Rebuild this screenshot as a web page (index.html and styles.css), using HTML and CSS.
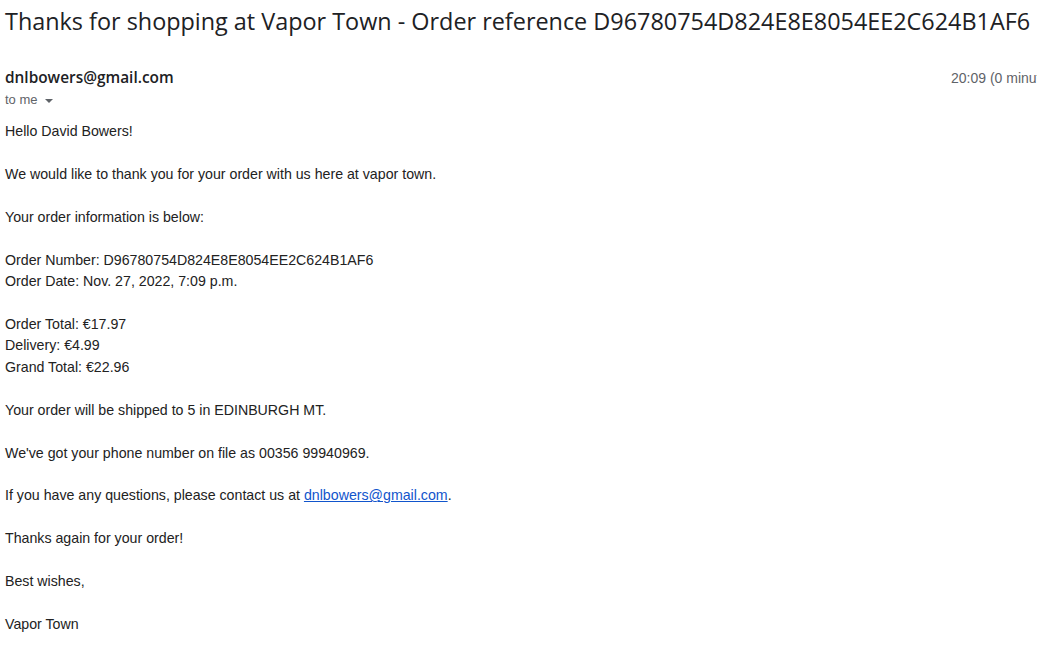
FILE: index.html
```html
<!DOCTYPE html>
<html>
<head>
<meta charset="utf-8">
<link rel="stylesheet" href="styles.css">
</head>
<body>
<div class="page">
  <h1 class="subject">Thanks for shopping at Vapor Town - Order reference D96780754D824E8E8054EE2C624B1AF6</h1>
  <div class="header">
    <div class="sender">
      <div class="from">dnlbowers@gmail.com</div>
      <div class="to">to me <svg class="caret" width="10" height="6" viewBox="0 0 10 6"><path d="M1 1h8L5 5z" fill="#5f6368"/></svg></div>
    </div>
    <div class="time">20:09 (0 minutes ago)</div>
  </div>
  <div class="body">
    Hello David Bowers!<br><br>
    We would like to thank you for your order with us here at vapor town.<br><br>
    Your order information is below:<br><br>
    Order Number: D96780754D824E8E8054EE2C624B1AF6<br>
    Order Date: Nov. 27, 2022, 7:09 p.m.<br><br>
    Order Total: €17.97<br>
    Delivery: €4.99<br>
    Grand Total: €22.96<br><br>
    Your order will be shipped to 5 in EDINBURGH MT.<br><br>
    We've got your phone number on file as 00356 99940969.<br><br>
    If you have any questions, please contact us at <a href="#" class="link">dnlbowers@gmail.com</a>.<br><br>
    Thanks again for your order!<br><br>
    Best wishes,<br><br>
    Vapor Town
  </div>
</div>
</body>
</html>
```
FILE: styles.css
```css
html, body { margin: 0; padding: 0; background: #fff; overflow: hidden; }
.page { width: 1037px; height: 646px; overflow: hidden; padding-left: 5px; box-sizing: border-box; }
.subject {
  margin: 0; padding-top: 5px;
  font-family: "Open Sans", sans-serif; font-weight: 400;
  font-size: 23.4px; line-height: 32px; color: #202124;
  white-space: nowrap;
}
.header { display: flex; justify-content: space-between; margin-top: 30px; white-space: nowrap; }
.from { font-family: "Open Sans", sans-serif; font-weight: 600; font-size: 15.4px; line-height: 22px; color: #202124; }
.to { font-family: "Liberation Sans", Arial, sans-serif; font-size: 13px; line-height: 22px; color: #5f6368; display: flex; align-items: center; gap: 6px; }
.caret { margin-top: 1px; }
.time { font-family: "Liberation Sans", Arial, sans-serif; font-size: 14px; line-height: 22px; color: #5f6368; flex: none; width: 86px; overflow: hidden; }
.body {
  margin-top: 10px;
  font-family: "Liberation Sans", Arial, sans-serif; font-size: 14.2px; line-height: 21.43px; color: #222;
}
.link { color: #1155cc; text-decoration: underline; }
```
